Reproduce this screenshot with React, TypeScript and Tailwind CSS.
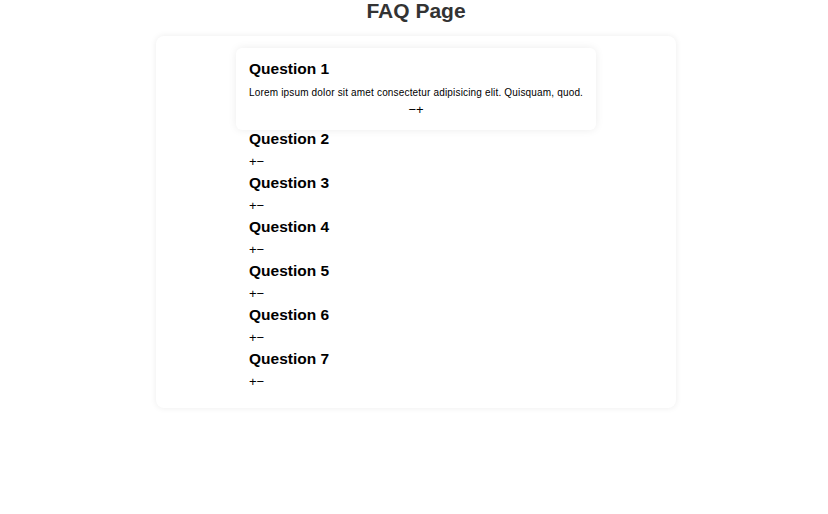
import React, { useState } from 'react';

const QUESTIONS = [1, 2, 3, 4, 5, 6, 7].map((n) => ({
  title: `Question ${n}`,
  answer: 'Lorem ipsum dolor sit amet consectetur adipisicing elit. Quisquam, quod.',
}));

const FaqItem = ({
  item,
  open,
  onToggle,
}: {
  item: typeof QUESTIONS[0];
  open: boolean;
  onToggle: () => void;
}) => (
  <div
    className={
      open
        ? 'w-[360px] px-[13px] pt-[12px] pb-[12px] bg-white rounded-md shadow-[0_0_8px_rgba(0,0,0,0.08)]'
        : 'w-[360px] px-[13px] mb-[4px]'
    }
  >
    <h3
      className={
        open
          ? 'text-[15.5px] leading-[18px] font-bold text-black mb-[9px]'
          : 'text-[15.5px] leading-[18px] font-bold text-black mb-[6px]'
      }
    >
      {item.title}
    </h3>
    {open && (
      <p className="text-[10px] leading-[12px] tracking-[0.17px] whitespace-nowrap text-black">{item.answer}</p>
    )}
    <button
      onClick={onToggle}
      className={
        open
          ? 'block w-full mt-[3px] text-center text-[13px] leading-[16px] text-black'
          : 'block text-left text-[13px] leading-[16px] text-black'
      }
    >
      {open ? '−+' : '+−'}
    </button>
  </div>
);

export default function App() {
  const [active, setActive] = useState(0);

  return (
    <div className="min-h-screen bg-white pl-[4px] font-['Liberation_Sans',Arial,sans-serif]">
      <h1 className="text-center text-[21px] leading-[22px] font-bold text-[#333] mb-[14px]">FAQ Page</h1>
      <div className="mx-auto w-[520px] bg-white rounded-lg shadow-[0_0_6px_rgba(0,0,0,0.08)] pt-[12px] pb-[14px] flex flex-col items-center">
        {QUESTIONS.map((q, i) => (
          <FaqItem
            key={i}
            item={q}
            open={active === i}
            onToggle={() => setActive(active === i ? -1 : i)}
          />
        ))}
      </div>
    </div>
  );
}
